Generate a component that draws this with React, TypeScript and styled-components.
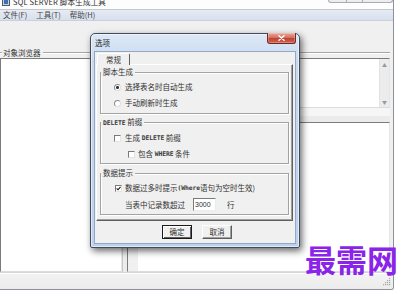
import React from 'react';
import styled, { createGlobalStyle } from 'styled-components';

const Global = createGlobalStyle`
  html, body { margin: 0; padding: 0; background: #ffffff; }
  body {
    width: 418px; height: 292px; overflow: hidden;
    font-family: "Noto Sans CJK SC", "Liberation Sans", sans-serif;
  }
`;

const CJK = `"Noto Sans CJK SC", "Liberation Sans", sans-serif`;
const MONO = `"DejaVu Sans Mono", "Liberation Mono", monospace`;
const INK = '#303030';

const Screen = styled.div`
  position: relative;
  width: 418px;
  height: 292px;
  overflow: hidden;
  background: #ffffff;
`;

/* ---------- main window ---------- */
const MainWindow = styled.div`
  width: 394px;
  height: 296px;
  margin-top: -6px;
  box-sizing: border-box;
  display: flex;
  flex-direction: column;
  background: #f0f0f0;
  border-right: 1px solid #8d9199;
  border-bottom: 1px solid #8d9199;
  border-bottom-right-radius: 3px;
  overflow: hidden;
`;

const TitleBar = styled.div`
  height: 16px;
  flex: none;
  box-sizing: border-box;
  display: flex;
  align-items: center;
  padding-left: 2px;
  background: #fdfdfd;
  border-bottom: 1px solid #c3c8d0;
`;

const AppIcon = styled.svg`
  width: 8px;
  height: 8px;
  flex: none;
`;

const TitleText = styled.span`
  margin-left: 3px;
  font-family: ${CJK};
  font-size: 7.5px;
  line-height: 9px;
  color: #2a2a2a;
  letter-spacing: 0.2px;
`;

const CaptionButtons = styled.div`
  margin-left: auto;
  align-self: flex-start;
  display: flex;
  height: 9px;
`;

const CaptionButton = styled.div<{ $w: number }>`
  width: ${p => p.$w}px;
  height: 9px;
  box-sizing: border-box;
  background: linear-gradient(#fafafa, #e9ebee);
  border: 1px solid #a9aeb6;
  border-top: none;
  border-left: ${p => (p.$w === 19 ? '1px solid #a9aeb6' : 'none')};
  &:first-child { border-bottom-left-radius: 3px; }
  &:last-child { border-bottom-right-radius: 3px; }
`;

const MenuBar = styled.div`
  height: 11px;
  flex: none;
  box-sizing: border-box;
  display: flex;
  align-items: center;
  gap: 9px;
  padding-left: 3px;
  background: linear-gradient(#e6ebf4, #d8e0ee);
  border-bottom: 1px solid #c9d0dc;
`;

const MenuItem = styled.span`
  font-family: ${CJK};
  font-size: 7.5px;
  line-height: 10px;
  color: #444444;
`;

const Toolbar = styled.div`
  height: 26px;
  flex: none;
  background: #f0f0f0;
`;

const SectionHeader = styled.div`
  height: 11px;
  flex: none;
  display: flex;
  align-items: center;
  margin-right: 3px;
`;

const HeaderLine = styled.div<{ $grow?: boolean }>`
  height: 1px;
  width: 2px;
  flex: ${p => (p.$grow ? '1' : 'none')};
  background: #a6a6a6;
  box-shadow: 0 1px 0 #ffffff;
`;

const HeaderLabel = styled.span`
  padding: 0 2px 0 1px;
  font-family: ${CJK};
  font-size: 7.5px;
  line-height: 10px;
  color: ${INK};
`;

const Body = styled.div`
  height: 214px;
  flex: none;
  display: flex;
  margin-right: 3px;
`;

const Panel = styled.div`
  box-sizing: border-box;
  background: #ffffff;
  border-top: 1px solid #7b7b7b;
  border-left: 1px solid #7b7b7b;
  border-bottom: 1px solid #dcdcdc;
  border-right: 1px solid #e6e6e6;
`;

const TreePanel = styled(Panel)`
  width: 122px;
  height: 214px;
  flex: none;
`;

const Splitter = styled.div`
  width: 5px;
  flex: none;
  box-sizing: border-box;
  border-left: 1px solid #c8c8c8;
  background: #ececec;
`;

const RightColumn = styled.div`
  flex: 1;
  display: flex;
  flex-direction: column;
`;

const SqlMemo = styled(Panel)`
  height: 50px;
  flex: none;
  display: flex;
  justify-content: flex-end;
`;

const ScrollBar = styled.div`
  width: 10px;
  display: flex;
  flex-direction: column;
  justify-content: space-between;
  align-items: center;
  background: #ececec;
  border-left: 1px solid #e2e2e2;
  padding: 3px 0;
  box-sizing: border-box;
`;

const Arrow = styled.span`
  font-family: ${CJK};
  font-size: 5px;
  line-height: 5px;
  color: #9a9a9a;
`;

const MidBand = styled.div`
  height: 14px;
  flex: none;
  background: linear-gradient(#f6f6f6 0%, #f6f6f6 55%, #ebebeb 56%, #ebebeb 100%);
`;

const ResultMemo = styled(Panel)`
  flex: 1;
  display: flex;
`;

const Gutter = styled.div`
  width: 10px;
  flex: none;
  background: #f0f0f0;
`;

const StatusBar = styled.div`
  height: 17px;
  flex: none;
  box-sizing: border-box;
  display: flex;
  align-items: flex-end;
  justify-content: flex-end;
  padding: 0 2px 3px 0;
  border-top: 1px solid #d6d6d6;
  background: linear-gradient(#f3f3f3, #ececec);
  box-shadow: inset 0 1px 0 #ffffff;
`;

const Grip = styled.svg`
  width: 8px;
  height: 8px;
`;

/* ---------- dialog ---------- */
const Dialog = styled.div`
  position: absolute;
  left: 90px;
  top: 33px;
  width: 210px;
  height: 215px;
  box-sizing: border-box;
  display: flex;
  flex-direction: column;
  padding: 0 4px 4px 4px;
  border: 1px solid #3f4b5c;
  border-radius: 5px 5px 2px 2px;
  background: linear-gradient(180deg, #dde8f5 0%, #c9daf0 12%, #bcd1ec 100%);
  box-shadow: 2px 3px 7px rgba(0, 0, 0, 0.6), inset 0 0 0 1px rgba(255, 255, 255, 0.55);
`;

const DialogTitleRow = styled.div`
  height: 18px;
  flex: none;
  display: flex;
  align-items: center;
`;

const DialogTitle = styled.span`
  font-family: ${CJK};
  font-size: 7.5px;
  line-height: 10px;
  color: #1a1a1a;
`;

const CloseButton = styled.div`
  margin-left: auto;
  margin-right: -1px;
  margin-top: -1px;
  align-self: flex-start;
  width: 29px;
  height: 11px;
  box-sizing: border-box;
  display: flex;
  align-items: center;
  justify-content: center;
  border: 1px solid #6b2b25;
  border-top: none;
  border-radius: 0 0 3px 3px;
  background: linear-gradient(#e9a999 0%, #d4705f 45%, #c24434 55%, #d2614f 100%);
  box-shadow: inset 0 0 0 1px rgba(255, 255, 255, 0.25);
`;

const CloseGlyph = styled.svg`
  width: 7px;
  height: 6px;
`;

const Client = styled.div`
  height: 191px;
  flex: none;
  display: flex;
  flex-direction: column;
  background: #f0f0f0;
  box-shadow: 0 0 0 1px #93a8c4;
`;

const TabStrip = styled.div`
  height: 12px;
  flex: none;
  display: flex;
  align-items: flex-end;
  padding-left: 2px;
`;

const Tab = styled.div`
  position: relative;
  z-index: 1;
  width: 33px;
  height: 12px;
  margin-bottom: -1px;
  box-sizing: border-box;
  display: flex;
  align-items: center;
  justify-content: center;
  background: #f0f0f0;
  border-top: 1px solid #ffffff;
  border-left: 1px solid #ffffff;
  border-right: 1px solid #5f5f5f;
  border-radius: 2px 2px 0 0;
  font-family: ${CJK};
  font-size: 7.5px;
  line-height: 10px;
  color: ${INK};
`;

const TabPage = styled.div`
  margin-left: 1px;
  width: 197px;
  height: 157px;
  flex: none;
  box-sizing: border-box;
  display: flex;
  flex-direction: column;
  padding: 3px 3px 5px 3px;
  border-top: 1px solid #ffffff;
  border-left: 1px solid #ffffff;
  border-right: 1px solid #5f5f5f;
  border-bottom: 1px solid #5f5f5f;
  box-shadow: inset -1px -1px 0 #a0a0a0;
`;

const Group = styled.fieldset<{ $gap: number; $pt: number; $pb: number }>`
  margin: ${p => p.$gap}px 0 0 0;
  padding: ${p => p.$pt}px 0 ${p => p.$pb}px 0;
  min-width: 0;
  border: 1px solid #a3a3a3;
  box-shadow: 1px 1px 0 #ffffff, inset 1px 1px 0 #ffffff;
`;

const Legend = styled.legend`
  padding: 0 2px;
  margin: 0;
  height: 8px;
  background: #f0f0f0;
  font-family: ${CJK};
  font-size: 7.5px;
  line-height: 8px;
  color: ${INK};
  white-space: nowrap;
`;

const OptionRow = styled.div<{ $indent: number; $h: number }>`
  height: ${p => p.$h}px;
  display: flex;
  align-items: center;
  padding-left: ${p => p.$indent}px;
  font-family: ${CJK};
  font-size: 7.5px;
  line-height: 10px;
  color: ${INK};
  white-space: nowrap;
`;

const Radio = styled.span<{ $on?: boolean }>`
  width: 7px;
  height: 7px;
  flex: none;
  box-sizing: border-box;
  border-radius: 50%;
  border: 1px solid #8c8c8c;
  border-bottom-color: #dedede;
  border-right-color: #dedede;
  background: ${p => (p.$on ? 'radial-gradient(circle, #333 0 1.3px, #fff 1.6px)' : '#ffffff')};
  margin-right: 4px;
`;

const Check = styled.span<{ $gap: number }>`
  width: 7px;
  height: 7px;
  flex: none;
  box-sizing: border-box;
  display: flex;
  align-items: center;
  justify-content: center;
  border-top: 1px solid #7a7a7a;
  border-left: 1px solid #7a7a7a;
  border-bottom: 1px solid #e4e4e4;
  border-right: 1px solid #e4e4e4;
  background: #ffffff;
  margin-right: ${p => p.$gap}px;
`;

const CheckMark = styled.svg`
  width: 5px;
  height: 5px;
`;

const Latin = styled.span`
  font-family: ${MONO};
  font-size: 6.4px;
  font-weight: bold;
  letter-spacing: -0.1px;
  color: #3a3a3a;
`;

const NumberBox = styled.div`
  width: 23px;
  height: 13px;
  margin: 0 11px 0 8px;
  box-sizing: border-box;
  display: flex;
  align-items: center;
  padding-left: 1px;
  background: #ffffff;
  border-top: 1px solid #7a7a7a;
  border-left: 1px solid #7a7a7a;
  border-bottom: 1px solid #ececec;
  border-right: 1px solid #ececec;
  font-family: "Liberation Sans", sans-serif;
  font-size: 7px;
  color: ${INK};
`;

const ButtonRow = styled.div`
  flex: 1;
  display: flex;
  justify-content: center;
  align-items: flex-start;
  gap: 10px;
  padding: 4px 0 0 4px;
`;

const PushButton = styled.div<{ $default?: boolean }>`
  width: 30px;
  height: 14px;
  box-sizing: border-box;
  display: flex;
  align-items: center;
  justify-content: center;
  background: #f0f0f0;
  font-family: ${CJK};
  font-size: 7.5px;
  line-height: 10px;
  color: ${INK};
  border: 1px solid ${p => (p.$default ? '#1a1a1a' : 'transparent')};
  border-top-color: ${p => (p.$default ? '#1a1a1a' : '#ffffff')};
  border-left-color: ${p => (p.$default ? '#1a1a1a' : '#ffffff')};
  border-right-color: ${p => (p.$default ? '#1a1a1a' : '#5f5f5f')};
  border-bottom-color: ${p => (p.$default ? '#1a1a1a' : '#5f5f5f')};
  box-shadow: ${p =>
    p.$default
      ? 'inset 1px 1px 0 #ffffff, inset -1px -1px 0 #5f5f5f'
      : 'inset -1px -1px 0 #a0a0a0'};
`;

const Watermark = styled.div`
  position: absolute;
  left: 305px;
  top: 243px;
  font-family: ${CJK};
  font-size: 31px;
  line-height: 31px;
  font-weight: 700;
  color: #8a24e8;
  white-space: nowrap;
`;

export default function App() {
  return (
    <Screen>
      <Global />
      <MainWindow>
        <TitleBar>
          <AppIcon viewBox="0 0 8 8">
            <rect x="0.5" y="0.5" width="7" height="7" fill="#c9d3df" stroke="#4d5a6b" strokeWidth="1" />
            <rect x="2" y="2" width="4" height="4" fill="#3b6fb0" />
          </AppIcon>
          <TitleText>SQL SERVER 脚本生成工具</TitleText>
          <CaptionButtons>
            <CaptionButton $w={19} />
            <CaptionButton $w={16} />
            <CaptionButton $w={30} />
          </CaptionButtons>
        </TitleBar>
        <MenuBar>
          <MenuItem>文件(F)</MenuItem>
          <MenuItem>工具(T)</MenuItem>
          <MenuItem>帮助(H)</MenuItem>
        </MenuBar>
        <Toolbar />
        <SectionHeader>
          <HeaderLine />
          <HeaderLabel>对象浏览器</HeaderLabel>
          <HeaderLine $grow />
        </SectionHeader>
        <Body>
          <TreePanel />
          <Splitter />
          <RightColumn>
            <SqlMemo>
              <ScrollBar>
                <Arrow>▲</Arrow>
                <Arrow>▼</Arrow>
              </ScrollBar>
            </SqlMemo>
            <MidBand />
            <ResultMemo>
              <Gutter />
            </ResultMemo>
          </RightColumn>
        </Body>
        <StatusBar>
          <Grip viewBox="0 0 8 8">
            <g fill="#a8a8a8">
              <rect x="6" y="0" width="1.2" height="1.2" />
              <rect x="4" y="2" width="1.2" height="1.2" />
              <rect x="6" y="2" width="1.2" height="1.2" />
              <rect x="2" y="4" width="1.2" height="1.2" />
              <rect x="4" y="4" width="1.2" height="1.2" />
              <rect x="6" y="4" width="1.2" height="1.2" />
              <rect x="0" y="6" width="1.2" height="1.2" />
              <rect x="2" y="6" width="1.2" height="1.2" />
              <rect x="4" y="6" width="1.2" height="1.2" />
              <rect x="6" y="6" width="1.2" height="1.2" />
            </g>
          </Grip>
        </StatusBar>
      </MainWindow>

      <Dialog>
        <DialogTitleRow>
          <DialogTitle>选项</DialogTitle>
          <CloseButton>
            <CloseGlyph viewBox="0 0 7 6">
              <path d="M1 0.8 L6 5.2 M6 0.8 L1 5.2" stroke="#ffffff" strokeWidth="1.5" strokeLinecap="round" />
            </CloseGlyph>
          </CloseButton>
        </DialogTitleRow>
        <Client>
          <TabStrip>
            <Tab>常规</Tab>
          </TabStrip>
          <TabPage>
            <Group $gap={0} $pt={3} $pb={2}>
              <Legend>脚本生成</Legend>
              <OptionRow $indent={13} $h={16}>
                <Radio $on />
                选择表名时自动生成
              </OptionRow>
              <OptionRow $indent={13} $h={16}>
                <Radio />
                手动刷新时生成
              </OptionRow>
            </Group>
            <Group $gap={4} $pt={4} $pb={1}>
              <Legend>
                <Latin>DELETE</Latin> 前缀
              </Legend>
              <OptionRow $indent={13} $h={16}>
                <Check $gap={4} />
                生成&nbsp;<Latin>DELETE</Latin>&nbsp;前缀
              </OptionRow>
              <OptionRow $indent={27} $h={16}>
                <Check $gap={3} />
                包含&nbsp;<Latin>WHERE</Latin>&nbsp;条件
              </OptionRow>
            </Group>
            <Group $gap={5} $pt={3} $pb={1}>
              <Legend>数据提示</Legend>
              <OptionRow $indent={14} $h={16}>
                <Check $gap={3}>
                  <CheckMark viewBox="0 0 5 5">
                    <path d="M0.6 2.4 L2 3.8 L4.5 0.9" stroke="#1a1a1a" strokeWidth="1.1" fill="none" />
                  </CheckMark>
                </Check>
                数据过多时提示<Latin>(Where</Latin>语句为空时生效)
              </OptionRow>
              <OptionRow $indent={24} $h={17}>
                当表中记录数超过
                <NumberBox>3000</NumberBox>
                行
              </OptionRow>
            </Group>
          </TabPage>
          <ButtonRow>
            <PushButton $default>确定</PushButton>
            <PushButton>取消</PushButton>
          </ButtonRow>
        </Client>
      </Dialog>

      <Watermark>最需网</Watermark>
    </Screen>
  );
}
